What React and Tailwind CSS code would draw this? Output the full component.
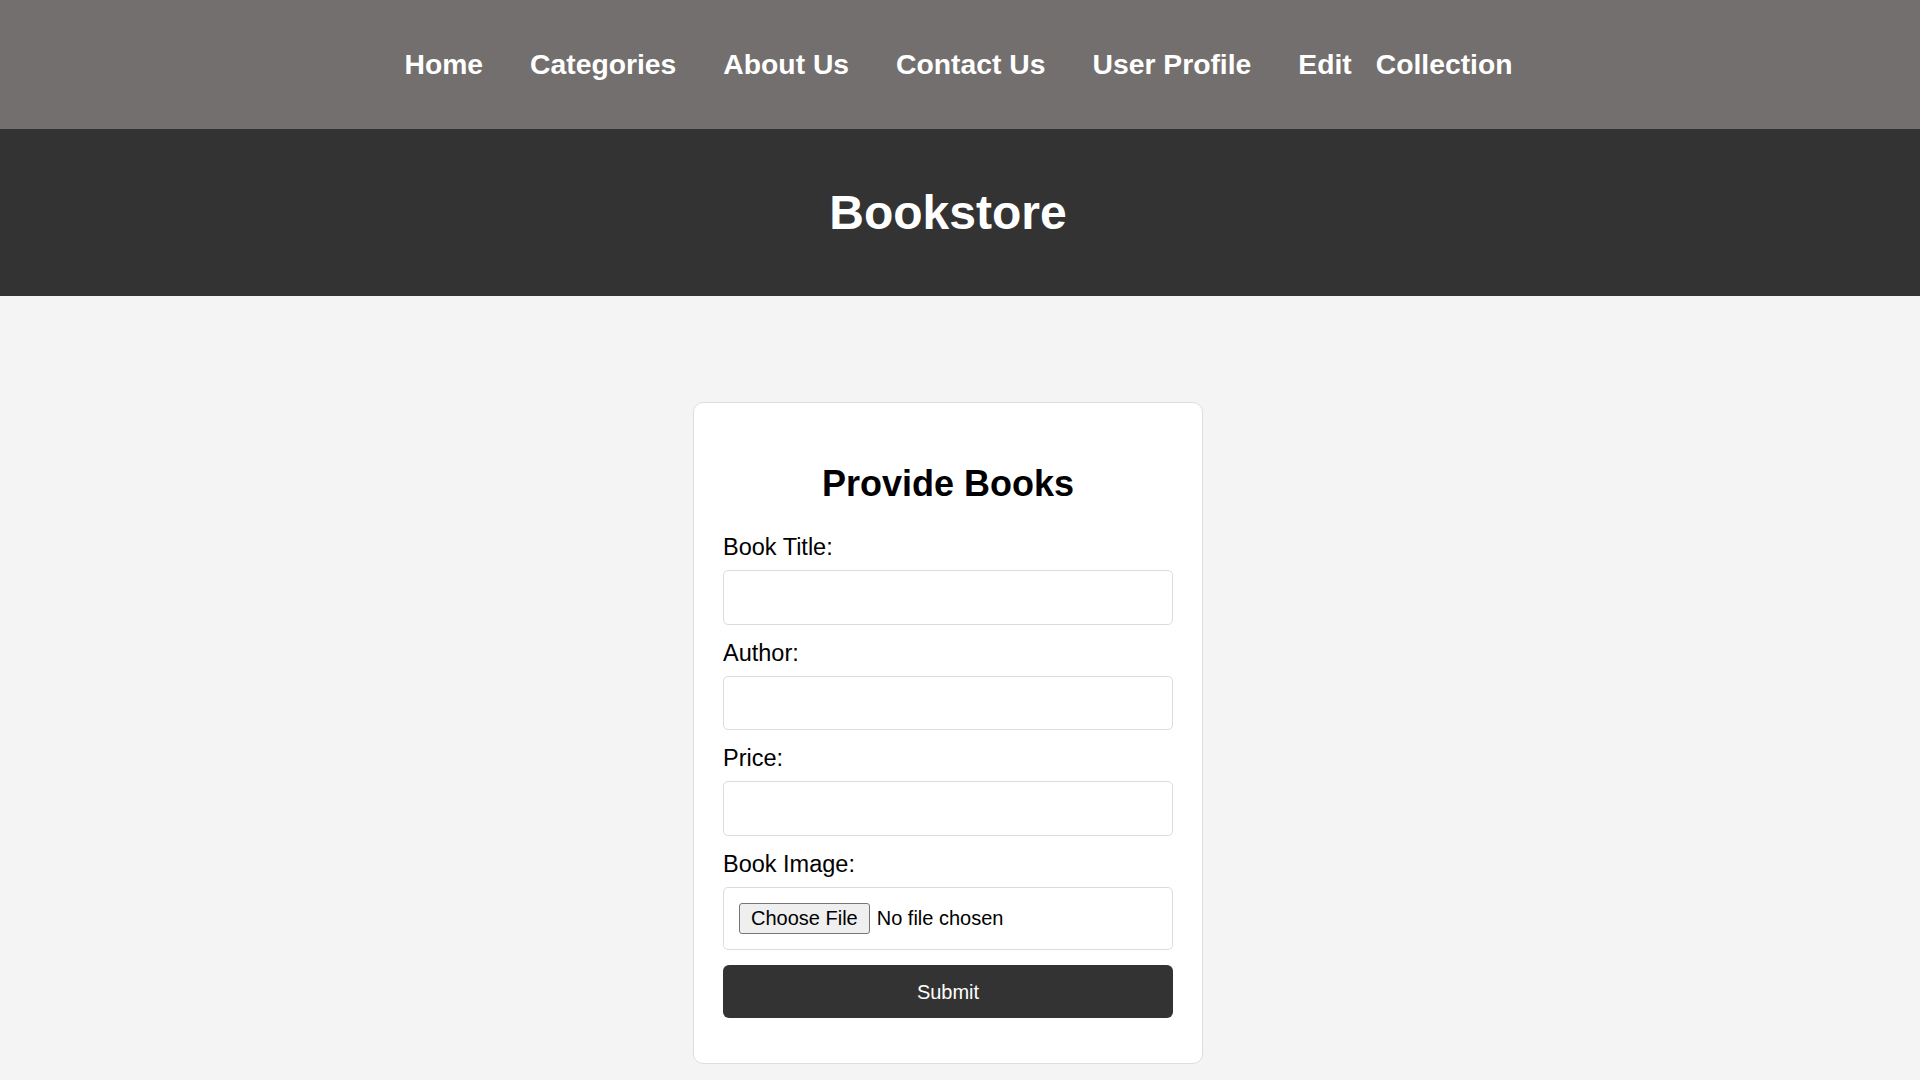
import React from "react";

function Field({ label }) {
  return (
    <div>
      <label className="block text-[23.5px] leading-[27px] mb-[9px] text-black">{label}</label>
      <input type="text" className="block w-full h-[54.5px] border border-[#dcdcdc] rounded-[5px] bg-white mb-[15px] outline-none" />
    </div>
  );
}

export default function App() {
  return (
    <div className="min-h-screen bg-[#f4f4f4] font-['Liberation_Sans',Arial,sans-serif]">
      <nav className="h-[129px] bg-[#736f6e] flex items-center justify-center gap-[47px] text-white font-bold text-[28.3px] pr-[3px]">
        <a>Home</a>
        <a>Categories</a>
        <a>About Us</a>
        <a>Contact Us</a>
        <a>User Profile</a>
        <span className="flex gap-[24px]">
          <a>Edit</a>
          <a>Collection</a>
        </span>
      </nav>
      <header className="h-[167px] bg-[#333333] flex items-center justify-center text-white text-[48px] font-bold pr-[24px]">
        Bookstore
      </header>
      <main className="flex justify-center pt-[106px] pb-[106px] pr-[24px]">
        <div className="w-[510px] bg-white border border-[#dedede] rounded-[10px] px-[29px] pt-[29px] pb-[29px]">
          <h2 className="text-[36px] font-bold text-center mt-[31px] mb-[30px] leading-[41px] text-black">Provide Books</h2>
          <form className="mb-[16px]" onSubmit={(e) => e.preventDefault()}>
            <Field label="Book Title:" />
            <Field label="Author:" />
            <Field label="Price:" />
            <label className="block text-[23.5px] leading-[27px] mb-[9px] text-black">Book Image:</label>
            <div className="h-[63.5px] border border-[#dcdcdc] rounded-[5px] bg-white px-[15px] flex items-center mb-[15px]">
              <span className="h-[31px] px-[11px] flex items-center border border-[#767676] rounded-[3px] bg-[#efefef] text-[20px] text-black">
                Choose File
              </span>
              <span className="ml-[7px] text-[20px] text-black">No file chosen</span>
            </div>
            <button type="submit" className="block w-full h-[53px] bg-[#333333] text-white text-[20px] rounded-[6px]">
              Submit
            </button>
          </form>
        </div>
      </main>
    </div>
  );
}
